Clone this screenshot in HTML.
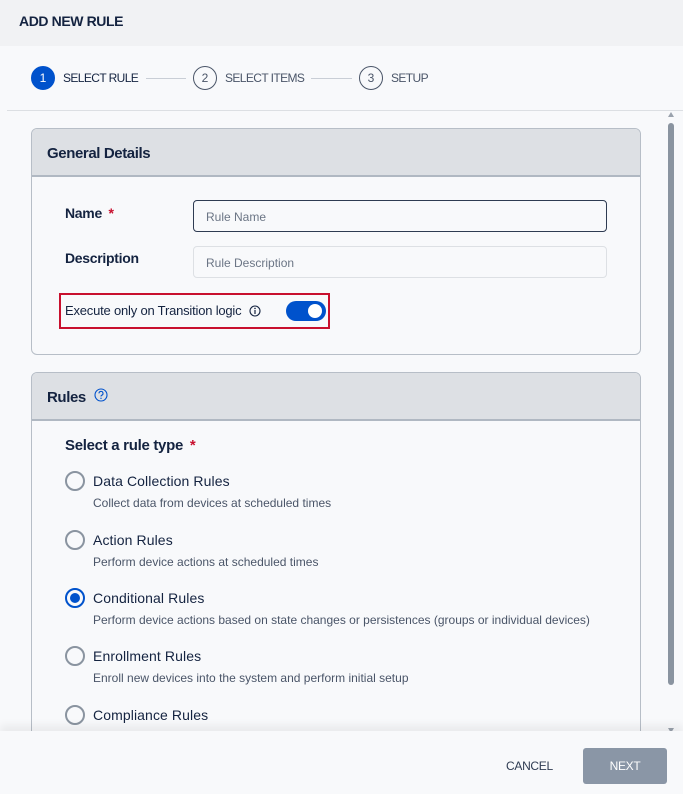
<!DOCTYPE html>
<html><head><style>
*{margin:0;padding:0;box-sizing:border-box}
body{width:683px;height:794px;overflow:hidden;background:#f8f9fb;font-family:"Liberation Sans",sans-serif;color:#142340;position:relative}
.a{position:absolute;white-space:nowrap}
.hdr{left:0;top:0;width:683px;height:46px;background:#f1f2f4}
.circ{width:24px;height:24px;border-radius:50%;border:1.3px solid #4a5568;font-size:12px;text-align:center;line-height:22px;color:#4a5568}
.step{font-size:12px;color:#4a5568;letter-spacing:-0.6px}
.ln{height:1px;background:#c9ced6}
.card{left:31px;width:610px;border:1.5px solid #b7bec7;border-radius:6px;background:#f8f9fb;overflow:hidden}
.ch{height:48px;background:#dde0e4;border-bottom:2px solid #b0b8c2;font-weight:bold;font-size:15px;padding:16px 0 0 15px;letter-spacing:-0.4px}
.lbl{font-weight:bold;font-size:14px;letter-spacing:-0.3px}
.inp{left:193px;width:414px;height:32px;border-radius:4px;font-size:12px;color:#6b7585;padding:9px 12px}
.rad{width:20px;height:20px;border-radius:50%;border:2px solid #8a94a0;left:65px}
.rt{left:93px;font-size:14px;letter-spacing:0.1px;color:#142340}
.rd{left:93px;font-size:12px;color:#4a5568;letter-spacing:0}
</style></head><body>
<div class="a hdr"></div>
<div class="a" style="left:19px;top:13px;font-weight:bold;font-size:14px;letter-spacing:-0.4px">ADD NEW RULE</div>

<div class="a circ" style="left:31px;top:66px;background:#0052cc;border-color:#0052cc;color:#fff">1</div>
<div class="a step" style="left:63px;top:71px;color:#142340">SELECT RULE</div>
<div class="a ln" style="left:146px;top:78px;width:40px"></div>
<div class="a circ" style="left:193px;top:66px">2</div>
<div class="a step" style="left:225px;top:71px">SELECT ITEMS</div>
<div class="a ln" style="left:311px;top:78px;width:41px"></div>
<div class="a circ" style="left:359px;top:66px">3</div>
<div class="a step" style="left:391px;top:71px">SETUP</div>
<div class="a" style="left:7px;top:110px;width:676px;height:1px;background:#dcdfe3"></div>

<div class="a" style="left:668px;top:112px;width:0;height:0;border-left:3px solid transparent;border-right:3px solid transparent;border-bottom:5px solid #9aa2ad"></div>
<div class="a" style="left:668px;top:123px;width:6px;height:562px;border-radius:3px;background:#8a94a0"></div>
<div class="a" style="left:668px;top:728px;width:0;height:0;border-left:3px solid transparent;border-right:3px solid transparent;border-top:5px solid #9aa2ad"></div>

<div class="a card" style="top:128px;height:227px">
<div class="ch">General Details</div>
</div>
<div class="a lbl" style="left:65px;top:205px">Name <span style="color:#c8102e;margin-left:3px">*</span></div>
<div class="a inp" style="top:200px;border:1px solid #2e3b52">Rule Name</div>
<div class="a lbl" style="left:65px;top:250px">Description</div>
<div class="a inp" style="top:246px;border:1px solid #dde0e4">Rule Description</div>
<div class="a" style="left:59px;top:293px;width:271px;height:36px;border:2px solid #c8102e"></div>
<div class="a" style="left:65px;top:303px;font-size:13px;letter-spacing:-0.2px">Execute only on Transition logic</div>
<svg class="a" style="left:249px;top:305px" width="12" height="12" viewBox="0 0 12 12"><circle cx="6" cy="6" r="5" fill="none" stroke="#142340" stroke-width="1.1"/><rect x="5.4" y="5" width="1.2" height="4" fill="#142340"/><circle cx="6" cy="3.4" r="0.8" fill="#142340"/></svg>
<div class="a" style="left:286px;top:301px;width:40px;height:20px;border-radius:10px;background:#0052cc"></div>
<div class="a" style="left:308px;top:304px;width:14px;height:14px;border-radius:50%;background:#fff"></div>

<div class="a card" style="top:372px;height:400px">
<div class="ch" style="height:48px">Rules</div>
</div>
<svg class="a" style="left:94px;top:388px" width="14" height="14" viewBox="0 0 14 14"><circle cx="7" cy="7" r="6" fill="none" stroke="#0052cc" stroke-width="1.1"/><path d="M5 5.4a2 2 0 1 1 2.6 1.9c-.5.2-.6.5-.6 1.2" fill="none" stroke="#0052cc" stroke-width="1.1"/><circle cx="7" cy="10.3" r=".7" fill="#0052cc"/></svg>
<div class="a lbl" style="left:65px;top:437px;font-size:15px">Select a rule type <span style="color:#c8102e;margin-left:3px">*</span></div>

<div class="a rad" style="top:471px"></div><div class="a rt" style="top:473px">Data Collection Rules</div><div class="a rd" style="top:496px">Collect data from devices at scheduled times</div>
<div class="a rad" style="top:530px"></div><div class="a rt" style="top:532px">Action Rules</div><div class="a rd" style="top:555px">Perform device actions at scheduled times</div>
<div class="a rad" style="top:588px;border-color:#0052cc"></div><div class="a" style="left:70px;top:593px;width:10px;height:10px;border-radius:50%;background:#0052cc"></div><div class="a rt" style="top:590px">Conditional Rules</div><div class="a rd" style="top:613px">Perform device actions based on state changes or persistences (groups or individual devices)</div>
<div class="a rad" style="top:646px"></div><div class="a rt" style="top:648px">Enrollment Rules</div><div class="a rd" style="top:671px">Enroll new devices into the system and perform initial setup</div>
<div class="a rad" style="top:705px"></div><div class="a rt" style="top:707px">Compliance Rules</div>

<div class="a" style="left:0;top:731px;width:683px;height:63px;background:#f8f9fb;box-shadow:0 -6px 8px rgba(0,0,0,0.06)"></div>
<div class="a" style="left:506px;top:759px;font-size:12px;color:#2e3b52;letter-spacing:-0.3px">CANCEL</div>
<div class="a" style="left:583px;top:748px;width:84px;height:36px;border-radius:3px;background:#8a96a6;color:#fff;font-size:12px;text-align:center;line-height:36px;letter-spacing:-0.3px">NEXT</div>
</body></html>
